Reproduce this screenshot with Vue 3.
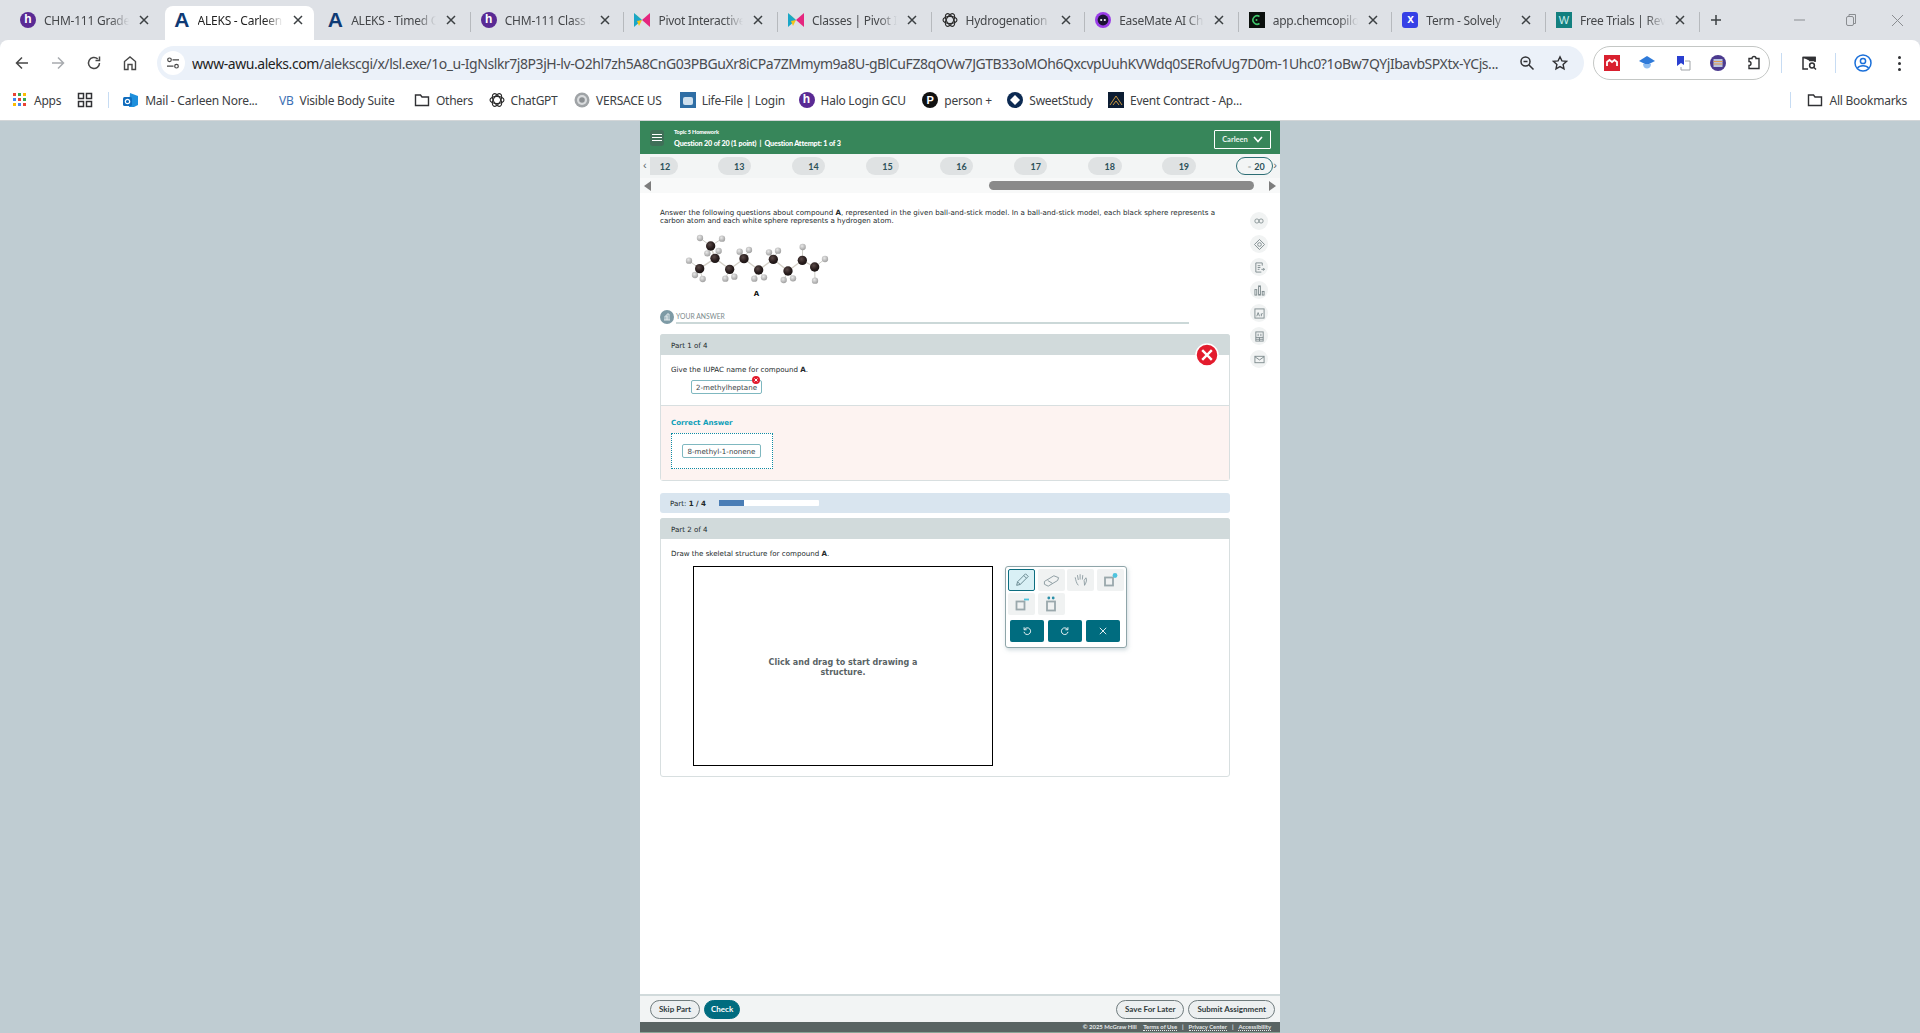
<script setup>
const tabs = [
  { title: 'CHM-111 Gradebook', icon: 'halo' },
  { title: 'ALEKS - Carleen Norell', icon: 'aleks', active: true },
  { title: 'ALEKS - Timed Quiz', icon: 'aleks' },
  { title: 'CHM-111 Class List', icon: 'halo' },
  { title: 'Pivot Interactives', icon: 'pivot' },
  { title: 'Classes | Pivot Interactives', icon: 'pivot' },
  { title: 'Hydrogenation', icon: 'gpt' },
  { title: 'EaseMate AI Chat', icon: 'ease' },
  { title: 'app.chemcopilot', icon: 'chem' },
  { title: 'Term - Solvely', icon: 'solvely' },
  { title: 'Free Trials | Review', icon: 'wv' }
]
const pills = ['13', '14', '15', '16', '17', '18', '19']
const carbons = [[122,63],[135,100],[89,131],[179,133],[222,101],[266,135],[310,103],[354,138],[397,106],[434,126]]
const hydrogens = [
  [90,39,0],[156,41,0],[112,85,0],[146,78,1],[57,107,2],[75,150,2],[98,162,2],[166,161,3],[193,155,3],
  [209,80,4],[237,75,4],[253,161,5],[282,157,5],[297,82,6],[324,77,6],[341,165,7],[369,160,7],
  [398,66,8],[465,102,9],[435,167,9]
]
const chain = [[0,1],[1,2],[1,3],[3,4],[4,5],[5,6],[6,7],[7,8],[8,9]]
const rail = ['inf', 'tag', 'note', 'bars', 'ar', 'calc', 'mail']
</script>

<template>
  <div class="browser">
    <div class="tabstrip">
      <div v-for="(t, i) in tabs" :key="i" class="tab" :class="{ active: t.active, sep: i >= 2 }">
        <span class="favicon">
          <span v-if="t.icon === 'halo'" class="fav-halo">h</span>
          <span v-else-if="t.icon === 'aleks'" class="fav-aleks">A</span>
          <svg v-else-if="t.icon === 'pivot'" viewBox="0 0 16 16" width="16" height="16">
            <polygon points="0,1 8,8 0,15" fill="#1aa6c8" />
            <polygon points="16,1 8,8 16,15" fill="#e5267f" />
            <polygon points="3,9 8,8 5,14" fill="#f5c518" />
            <polygon points="0,1 8,8 4,5" fill="#2fb66d" />
          </svg>
          <svg v-else-if="t.icon === 'gpt'" viewBox="0 0 16 16" width="16" height="16" fill="none" stroke="#2b2b2b" stroke-width="1.1">
            <ellipse cx="8" cy="8" rx="7" ry="3.6" />
            <ellipse cx="8" cy="8" rx="7" ry="3.6" transform="rotate(60 8 8)" />
            <ellipse cx="8" cy="8" rx="7" ry="3.6" transform="rotate(120 8 8)" />
          </svg>
          <svg v-else-if="t.icon === 'ease'" viewBox="0 0 16 16" width="16" height="16">
            <circle cx="8" cy="8" r="8" fill="#9a3de8" />
            <circle cx="8" cy="8" r="5.4" fill="#1b1333" />
            <circle cx="6.2" cy="8" r="1.1" fill="#fff" />
            <circle cx="9.8" cy="8" r="1.1" fill="#fff" />
          </svg>
          <svg v-else-if="t.icon === 'chem'" viewBox="0 0 16 16" width="16" height="16">
            <rect width="16" height="16" fill="#0a0f0c" />
            <path d="M10.5 4.5A4.2 4.2 0 1 0 10.5 11.5" fill="none" stroke="#3fc66b" stroke-width="1.6" />
            <circle cx="7.5" cy="8" r="1" fill="#3fc66b" />
          </svg>
          <span v-else-if="t.icon === 'solvely'" class="fav-solvely">x</span>
          <span v-else-if="t.icon === 'wv'" class="fav-wv">W</span>
        </span>
        <span class="tab-title">{{ t.title }}</span>
        <svg class="tab-close" viewBox="0 0 10 10" width="10" height="10"><path d="M1 1l8 8M9 1l-8 8" stroke="#3c4043" stroke-width="1.5" fill="none" /></svg>
      </div>
      <svg class="newtab" viewBox="0 0 12 12" width="12" height="12"><path d="M6 1v10M1 6h10" stroke="#3c4043" stroke-width="1.5" /></svg>
      <div class="winctl">
        <svg viewBox="0 0 46 20" width="46" height="20"><path d="M12 10h11" stroke="#8a8d91" /></svg>
        <svg viewBox="0 0 46 20" width="46" height="20" fill="none" stroke="#8a8d91"><rect x="18.5" y="6.5" width="7" height="9" rx="1.5" /><path d="M21 6V4.500h6.500v9H26" /></svg>
        <svg viewBox="0 0 46 20" width="46" height="20"><path d="M18 5l11 11M29 5L18 16" stroke="#8a8d91" /></svg>
      </div>
    </div>

    <div class="toolbar">
      <span class="navbtn"><svg viewBox="0 0 16 16" width="16" height="16" fill="none" stroke="#474747" stroke-width="1.5"><path d="M14 8H2.500M8 2.500L2.500 8 8 13.500" /></svg></span>
      <span class="navbtn"><svg viewBox="0 0 16 16" width="16" height="16" fill="none" stroke="#a8abaf" stroke-width="1.5"><path d="M2 8h11.500M8 2.500L13.500 8 8 13.500" /></svg></span>
      <span class="navbtn"><svg viewBox="0 0 16 16" width="16" height="16" fill="none" stroke="#474747" stroke-width="1.500"><path d="M13.500 8A5.500 5.500 0 1 1 11.700 3.900" /><path d="M13.500 1.500v4h-4" /></svg></span>
      <span class="navbtn"><svg viewBox="0 0 16 16" width="16" height="16" fill="none" stroke="#474747" stroke-width="1.400"><path d="M2.500 14.500V6.500L8 2l5.500 4.500v8h-3.500v-5H6v5z" /></svg></span>
      <div class="omnibox">
        <span class="tune"><svg viewBox="0 0 14 14" width="14" height="14" fill="none" stroke="#474747" stroke-width="1.200"><circle cx="3.500" cy="3.800" r="1.800" /><path d="M6.500 3.800H13M1 10.200h6.500" /><circle cx="10.500" cy="10.200" r="1.800" /></svg></span>
        <span class="url"><b>www-awu.aleks.com</b>/alekscgi/x/lsl.exe/1o_u-IgNslkr7j8P3jH-lv-O2hl7zh5A8CnG03PBGuXr8iCPa7ZMmym9a8U-gBlCuFZ8qOVw7JGTB33oMOh6QxcvpUuhKVWdq0SERofvUg7D0m-1Uhc0?1oBw7QYjIbavbSPXtx-YCjs...</span>
        <svg class="omni-i" viewBox="0 0 16 16" width="16" height="16" fill="none" stroke="#303134" stroke-width="1.500"><circle cx="6.500" cy="6.500" r="4.500" /><path d="M10 10l4.500 4.500M4.500 6.500h4" /></svg>
        <svg class="omni-i star" viewBox="0 0 16 16" width="16" height="16" fill="none" stroke="#303134" stroke-width="1.400"><path d="M8 1.800l1.900 4.100 4.500.5-3.300 3 .9 4.400L8 11.600l-4 2.200.9-4.400-3.300-3 4.500-.5z" /></svg>
      </div>
      <div class="extpill">
        <span class="ext"><svg viewBox="0 0 16 16" width="16" height="16"><rect width="16" height="16" fill="#d9202f" /><path d="M3 11V7l2.500-2L8 7l2.500-2L13 7v4" fill="none" stroke="#fff" stroke-width="1.800" /></svg></span>
        <span class="ext"><svg viewBox="0 0 16 16" width="16" height="16"><polygon points="8,1 16,6 8,10 0,6" fill="#2f7ad9" /><path d="M4 9c0 6 8 6 8 0z" fill="#8fbdf0" /></svg></span>
        <span class="ext"><svg viewBox="0 0 16 16" width="16" height="16"><path d="M2 1h7v9L6 8l-4 3z" fill="#2a3fd0" /><path d="M10 6h5v9H6v-3" fill="none" stroke="#a0a3a8" /></svg></span>
        <span class="ext"><svg viewBox="0 0 16 16" width="16" height="16"><circle cx="8" cy="8" r="8" fill="#4b3a8f" /><rect x="3.500" y="4" width="9" height="8" fill="#b9c3de" /><path d="M3.500 6.500h9M3.500 9h9" stroke="#e09a4a" /></svg></span>
        <span class="ext"><svg viewBox="0 0 16 16" width="16" height="16" fill="none" stroke="#303134" stroke-width="1.400"><path d="M3 3.500h3a2 2 0 0 1 4 0h3v10H3v-3a2 2 0 0 0 0-4z" /></svg></span>
      </div>
      <span class="tdiv first"></span>
      <span class="tbtn"><svg viewBox="0 0 16 16" width="16" height="16" fill="none" stroke="#303134" stroke-width="1.500"><path d="M7 14H2V2.500h12V7" /><path d="M2 2.500h12v3H8" fill="#303134" /><circle cx="11" cy="10.500" r="2.400" /><path d="M13 12.500l2 2" /></svg></span>
      <span class="tdiv"></span>
      <span class="tbtn"><svg viewBox="0 0 18 18" width="18" height="18" fill="none" stroke="#1a6fd9" stroke-width="1.500"><circle cx="9" cy="9" r="8" /><circle cx="9" cy="7" r="2.600" /><path d="M3.500 14c2-3 9-3 11 0" /></svg></span>
      <span class="tbtn dots"><i></i><i></i><i></i></span>
    </div>

    <div class="bookmarks">
      <span class="bm apps">
        <svg viewBox="0 0 14 14" width="14" height="14">
          <rect x="0" y="0" width="3" height="3" fill="#ea4335" /><rect x="5" y="0" width="3" height="3" fill="#34a853" /><rect x="10" y="0" width="3" height="3" fill="#fbbc04" />
          <rect x="0" y="5" width="3" height="3" fill="#4285f4" /><rect x="5" y="5" width="3" height="3" fill="#ea4335" /><rect x="10" y="5" width="3" height="3" fill="#34a853" />
          <rect x="0" y="10" width="3" height="3" fill="#fbbc04" /><rect x="5" y="10" width="3" height="3" fill="#4285f4" /><rect x="10" y="10" width="3" height="3" fill="#ea4335" />
        </svg>
        Apps
      </span>
      <svg class="gridicon" viewBox="0 0 16 16" width="16" height="16" fill="none" stroke="#303134" stroke-width="1.500"><rect x="1.500" y="1.500" width="5" height="5" /><rect x="9.500" y="1.500" width="5" height="5" /><rect x="1.500" y="9.500" width="5" height="5" /><rect x="9.500" y="9.500" width="5" height="5" /></svg>
      <span class="bdiv"></span>
      <span class="bm"><svg viewBox="0 0 16 16" width="16" height="16"><path d="M7 1l8 3v9l-4 2H6z" fill="#1e8fdc" /><rect x="0" y="5" width="9" height="9" rx="1.500" fill="#0f6cbd" /><circle cx="4.500" cy="9.500" r="2.200" fill="none" stroke="#fff" stroke-width="1.200" /></svg>Mail - Carleen Nore...</span>
      <span class="bm"><span class="vb">VB</span>Visible Body Suite</span>
      <span class="bm"><svg viewBox="0 0 16 16" width="16" height="16" fill="none" stroke="#303134" stroke-width="1.400"><path d="M1.500 3h5l1.500 2h6.500v8.500h-13z" /></svg>Others</span>
      <span class="bm"><svg viewBox="0 0 16 16" width="16" height="16" fill="none" stroke="#2b2b2b" stroke-width="1.100"><ellipse cx="8" cy="8" rx="7" ry="3.600" /><ellipse cx="8" cy="8" rx="7" ry="3.600" transform="rotate(60 8 8)" /><ellipse cx="8" cy="8" rx="7" ry="3.600" transform="rotate(120 8 8)" /></svg>ChatGPT</span>
      <span class="bm"><svg viewBox="0 0 16 16" width="16" height="16"><circle cx="8" cy="8" r="7.500" fill="#9fa3a6" /><circle cx="8" cy="8" r="5" fill="#d9dbdd" /><circle cx="8" cy="8" r="2.800" fill="#8b8f92" /></svg>VERSACE US</span>
      <span class="bm"><svg viewBox="0 0 16 16" width="16" height="16"><rect width="16" height="16" fill="#2f6ea5" /><rect x="3" y="5" width="10" height="8" rx="2" fill="#cfe0ee" /></svg>Life-File | Login</span>
      <span class="bm"><span class="fav-halo">h</span>Halo Login GCU</span>
      <span class="bm"><span class="fav-p">P</span>person +</span>
      <span class="bm"><svg viewBox="0 0 16 16" width="16" height="16"><circle cx="8" cy="8" r="8" fill="#0c2a52" /><polygon points="8,3 13,8 8,13 3,8" fill="#fff" /></svg>SweetStudy</span>
      <span class="bm"><svg viewBox="0 0 16 16" width="16" height="16"><rect width="16" height="16" fill="#0d1d33" /><path d="M2 13L8 4l6 9M5 13l3-4 3 4" fill="none" stroke="#c9973f" /></svg>Event Contract - Ap...</span>
      <span class="bdiv right"></span>
      <span class="bm"><svg viewBox="0 0 16 16" width="16" height="16" fill="none" stroke="#303134" stroke-width="1.400"><path d="M1.500 3h5l1.500 2h6.500v8.500h-13z" /></svg>All Bookmarks</span>
    </div>

    <div class="page">
      <div class="panel">
        <header class="head">
          <span class="burger"><i></i><i></i><i></i></span>
          <div class="head-txt">
            <div class="topic">Topic 5 Homework</div>
            <div class="qline">Question 20 of 20 (1 point) &nbsp;|&nbsp; Question Attempt: 1 of 3</div>
          </div>
          <button class="user">Carleen <svg viewBox="0 0 10 7" width="10" height="7"><path d="M1 1l4 4.500L9 1" fill="none" stroke="#fff" stroke-width="1.600" /></svg></button>
        </header>

        <nav class="qnav">
          <span class="chev left">‹</span>
          <span class="pill first">12</span>
          <span v-for="p in pills" :key="p" class="pill">{{ p }}</span>
          <span class="pill current"><em>=</em> 20</span>
          <span class="chev right">›</span>
        </nav>
        <div class="hscroll">
          <span class="tri l"></span>
          <span class="thumb"></span>
          <span class="tri r"></span>
        </div>

        <main class="main">
          <div class="col">
            <p class="q">Answer the following questions about compound <b>A</b>, represented in the given ball-and-stick model. In a ball-and-stick model, each black sphere represents a carbon atom and each white sphere represents a hydrogen atom.</p>
            <div class="figure">
              <svg viewBox="0 0 510 189" width="170" height="63">
                <defs>
                  <radialGradient id="cg" cx="0.4" cy="0.35" r="0.7"><stop offset="0" stop-color="#5a4a48" /><stop offset="0.6" stop-color="#2a1e1e" /><stop offset="1" stop-color="#171212" /></radialGradient>
                  <radialGradient id="hg" cx="0.4" cy="0.35" r="0.7"><stop offset="0" stop-color="#e8e8e8" /><stop offset="1" stop-color="#9c9c9c" /></radialGradient>
                </defs>
                <line v-for="(h, i) in hydrogens" :key="'hb' + i" :x1="h[0]" :y1="h[1]" :x2="carbons[h[2]][0]" :y2="carbons[h[2]][1]" stroke="#cfcfc8" stroke-width="3" />
                <line v-for="(b, i) in chain" :key="'cb' + i" :x1="carbons[b[0]][0]" :y1="carbons[b[0]][1]" :x2="carbons[b[1]][0]" :y2="carbons[b[1]][1]" stroke="#d3cfc6" stroke-width="4" />
                <circle v-for="(h, i) in hydrogens" :key="'h' + i" :cx="h[0]" :cy="h[1]" r="9.500" fill="url(#hg)" />
                <circle v-for="(c, i) in carbons" :key="'c' + i" :cx="c[0]" :cy="c[1]" r="14" fill="url(#cg)" />
              </svg>
              <div class="fig-label">A</div>
            </div>

            <div class="ya">
              <span class="ya-dot"><svg viewBox="0 0 8 8" width="8" height="8"><path d="M1 7h6M2 7V3h2v4M4 7V1h2v6" fill="none" stroke="#dfe7ea" /></svg></span>
              <span class="ya-label">YOUR ANSWER</span>
            </div>

            <section class="card one">
              <div class="card-head">Part 1 of 4</div>
              <div class="wrong"><svg viewBox="0 0 24 24" width="24" height="24"><circle cx="12" cy="12" r="11" fill="#e31b2d" stroke="#fff" stroke-width="1.500" /><path d="M7.200 7.200l9.600 9.600M16.800 7.200l-9.600 9.600" stroke="#fff" stroke-width="2.400" /></svg></div>
              <div class="card-body answer">
                <div class="prompt">Give the IUPAC name for compound <b>A</b>.</div>
                <div class="ansbox mine">2-methylheptane
                  <svg class="badx" viewBox="0 0 8 8" width="8" height="8"><circle cx="4" cy="4" r="4" fill="#e31b2d" /><path d="M2.500 2.500l3 3M5.500 2.500l-3 3" stroke="#fff" /></svg>
                </div>
              </div>
              <div class="correct">
                <div class="ctitle">Correct Answer</div>
                <div class="dotted"><div class="ansbox">8-methyl-1-nonene</div></div>
              </div>
            </section>

            <div class="progress">
              <span>Part: <b>1 / 4</b></span>
              <span class="track"><span class="fill"></span></span>
            </div>

            <section class="card two">
              <div class="card-head">Part 2 of 4</div>
              <div class="card-body draw">
                <div class="prompt">Draw the skeletal structure for compound <b>A</b>.</div>
                <div class="workspace">
                  <div class="canvas"><span>Click and drag to start drawing a structure.</span></div>
                  <div class="palette">
                    <div class="tools">
                      <span class="tool on"><svg viewBox="0 0 18 18" width="16" height="16" fill="none" stroke="#5f7f87"><path d="M3 15l1-4L13 2l3 3-9 9zM4 11l3 3M11 4l3 3" /></svg></span>
                      <span class="tool"><svg viewBox="0 0 18 18" width="17" height="17" fill="none" stroke="#8a9a9f"><path d="M1.500 10l10-6 5 2-1 3-10 6-4-2zM5 9l5 3" /></svg></span>
                      <span class="tool"><svg viewBox="0 0 18 18" width="16" height="16" fill="none" stroke="#8a9a9f"><path d="M6 15C4 13 3 9 2.500 6M6 9L5 3.500M8 8.500V2.500M10.500 8.500l.5-5M12.500 9.500l2-3C16 8 15 12 13 15z" /></svg></span>
                      <span class="tool"><svg viewBox="0 0 18 18" width="18" height="18"><rect x="4" y="6.500" width="8" height="8" fill="none" stroke="#9aa8ac" stroke-width="1.800" /><circle cx="14" cy="4.500" r="2.400" fill="#4fc3dd" /></svg></span>
                      <span class="tool"><svg viewBox="0 0 18 18" width="18" height="18"><rect x="3.500" y="6.500" width="8" height="8" fill="none" stroke="#9aa8ac" stroke-width="1.800" /><path d="M11 4.500h5" stroke="#4fc3dd" stroke-width="1.800" /></svg></span>
                      <span class="tool"><svg viewBox="0 0 18 18" width="18" height="18"><rect x="5" y="6.500" width="8" height="9" fill="none" stroke="#9aa8ac" stroke-width="1.800" /><circle cx="6.800" cy="3" r="1.400" fill="#2c8fa8" /><circle cx="11.200" cy="3" r="1.400" fill="#2c8fa8" /></svg></span>
                    </div>
                    <div class="actions">
                      <button class="act"><svg viewBox="0 0 12 12" width="10" height="10" fill="none" stroke="#fff" stroke-width="1.100"><path d="M3 4a4 4 0 1 1-.6 3M2.500 1.500V4.500h3" /></svg></button>
                      <button class="act"><svg viewBox="0 0 12 12" width="10" height="10" fill="none" stroke="#fff" stroke-width="1.100"><path d="M9 4a4 4 0 1 0 .6 3M9.500 1.500V4.500h-3" /></svg></button>
                      <button class="act"><svg viewBox="0 0 10 10" width="8" height="8" fill="none" stroke="#fff" stroke-width="1.100"><path d="M1 1l8 8M9 1l-8 8" /></svg></button>
                    </div>
                  </div>
                </div>
              </div>
            </section>
          </div>

          <aside class="rail">
            <span v-for="r in rail" :key="r" class="rail-btn">
              <svg v-if="r === 'inf'" viewBox="0 0 12 12" width="10" height="10" fill="none" stroke="#7d8a8d"><circle cx="3.500" cy="6" r="2.500" /><circle cx="8.500" cy="6" r="2.500" /></svg>
              <svg v-else-if="r === 'tag'" viewBox="0 0 12 12" width="11" height="11" fill="none" stroke="#7d8a8d"><polygon points="6,.5 11.500,6 6,11.500 .5,6" /><circle cx="6" cy="6" r="2" /></svg>
              <svg v-else-if="r === 'note'" viewBox="0 0 12 12" width="11" height="11" fill="none" stroke="#7d8a8d"><path d="M9 4V1H2v10h6M4 4h3M4 6h3M4 8h2M8 8h3.500M10 6.500l1.500 1.500L10 9.500" /></svg>
              <svg v-else-if="r === 'bars'" viewBox="0 0 12 12" width="11" height="11" fill="none" stroke="#7d8a8d"><rect x="1" y="5" width="2" height="6" /><rect x="5" y="1" width="2" height="10" /><rect x="9" y="7" width="2" height="4" /></svg>
              <svg v-else-if="r === 'ar'" viewBox="0 0 12 12" width="11" height="11" fill="none" stroke="#7d8a8d"><rect x="1" y="1" width="10" height="10" /><path d="M3 9l1.500-4L6 9M8 6v3M8 7l1.500-1" /></svg>
              <svg v-else-if="r === 'calc'" viewBox="0 0 12 12" width="11" height="11" fill="none" stroke="#7d8a8d"><rect x="2" y="1" width="8" height="10" /><path d="M2 7h8M2 9h8M6 7v4M4.500 3v2.500M7.500 3v2.500" /></svg>
              <svg v-else viewBox="0 0 12 12" width="11" height="11" fill="none" stroke="#7d8a8d"><rect x="1" y="2.500" width="10" height="7" /><path d="M1 3l5 3.500L11 3" /></svg>
            </span>
          </aside>
        </main>

        <footer class="foot">
          <button class="fbtn">Skip Part</button>
          <button class="fbtn check">Check</button>
          <span class="spacer"></span>
          <button class="fbtn">Save For Later</button>
          <button class="fbtn">Submit Assignment</button>
        </footer>
        <div class="legal">© 2025 McGraw Hill <a>Terms of Use</a><i>|</i><a>Privacy Center</a><i>|</i><a>Accessibility</a></div>
      </div>
    </div>
  </div>
</template>

<style>
html, body { margin: 0; overflow: hidden; }
</style>

<style scoped>
.browser { width: 1920px; height: 1033px; display: flex; flex-direction: column; background: #dee1e6; font-family: "Noto Sans", "Liberation Sans", sans-serif; overflow: hidden; }

.tabstrip { height: 40px; padding: 6px 0 0 11px; box-sizing: border-box; display: flex; flex: none; position: relative; }
.tab { width: 153.6px; flex: none; height: 34px; box-sizing: border-box; display: flex; align-items: center; padding: 0 0 6px 9px; position: relative; color: #45474a; font-size: 12px; letter-spacing: -.25px; }
.tab.active { background: #fff; border-radius: 8px 8px 0 0; color: #1f1f1f; width: 149.600px; margin-right: 4px; padding-bottom: 6px; }
.tab.sep::after { content: ""; position: absolute; right: 1px; top: 6px; height: 20px; width: 1px; background: #b6b9bd; }
.favicon { width: 16px; height: 16px; flex: none; display: flex; align-items: center; justify-content: center; margin-right: 8px; }
.fav-halo { width: 16px; height: 16px; flex: none; border-radius: 50%; background: #5a2a94; color: #fff; font: bold 12px/15px "Liberation Sans", sans-serif; text-align: center; letter-spacing: 0; }
.fav-aleks { color: #0e3a75; font: bold 21px/16px "Liberation Sans", sans-serif; }
.fav-solvely { width: 16px; height: 16px; border-radius: 3px; background: #3640e6; color: #fff; font: bold 12px/14px "Liberation Sans", sans-serif; text-align: center; }
.fav-wv { width: 16px; height: 16px; background: #13807f; color: #cfeeee; font: 11px/16px "Liberation Sans", sans-serif; text-align: center; }
.fav-p { width: 16px; height: 16px; flex: none; border-radius: 50%; background: #111; color: #fff; font: bold 11px/16px "Liberation Sans", sans-serif; text-align: center; letter-spacing: 0; }
.tab-title { width: 85px; overflow: hidden; white-space: nowrap; flex: none; -webkit-mask-image: linear-gradient(90deg, #000 78%, transparent 100%); mask-image: linear-gradient(90deg, #000 78%, transparent 100%); }
.tab-close { margin-left: 10px; flex: none; }
.newtab { margin: 8px 0 0 9px; flex: none; }
.winctl { position: absolute; right: 0; top: 10px; display: flex; }
.winctl svg { display: block; }

.toolbar { height: 40px; background: #fff; border-radius: 8px 8px 0 0; display: flex; align-items: flex-start; padding: 6px 0 0 4px; box-sizing: border-box; flex: none; }
.navbtn { width: 36px; height: 34px; flex: none; display: flex; align-items: center; justify-content: center; }
.omnibox { width: 1427px; height: 34px; margin-left: 9px; border-radius: 17px; background: #ebf1f9; display: flex; align-items: center; box-sizing: border-box; flex: none; }
.tune { width: 24px; height: 24px; margin-left: 4px; border-radius: 50%; background: #fff; display: flex; align-items: center; justify-content: center; flex: none; }
.url { margin-left: 7px; width: 1315px; flex: none; white-space: nowrap; overflow: hidden; font-size: 14px; letter-spacing: -.44px; color: #4a4c50; }
.url b { font-weight: 400; color: #1f1f1f; }
.omni-i { flex: none; margin-left: 12px; }
.omni-i.star { margin-left: 17px; }
.extpill { width: 177px; height: 34px; margin-left: 9px; border: 1px solid #c4c7c5; border-radius: 17px; box-sizing: border-box; display: flex; align-items: center; flex: none; }
.ext { width: 35.500px; flex: none; display: flex; justify-content: center; }
.tdiv { width: 1px; height: 20px; background: #c7dcf3; margin: 7px 0 0 0; flex: none; }
.tdiv.first { margin-left: 11px; }
.tbtn { width: 53px; height: 34px; flex: none; display: flex; align-items: center; justify-content: center; }
.dots { width: 20px; flex-direction: column; gap: 3px; }
.dots i { width: 3px; height: 3px; border-radius: 50%; background: #303134; display: block; }

.bookmarks { height: 40px; background: #fff; display: flex; align-items: center; padding-left: 13px; box-sizing: border-box; flex: none; font-size: 12px; letter-spacing: -.25px; color: #3c4043; white-space: nowrap; }
.bm { display: flex; align-items: center; gap: 6px; margin-right: 18px; flex: none; }
.bm.apps { margin-right: 16px; gap: 7px; }
.bm:nth-child(4) { margin-right: 21.500px; }
.bm:nth-child(5) { margin-right: 19.500px; }
.bm:nth-child(6) { margin-right: 15.500px; }
.bm:nth-child(7) { margin-right: 16.500px; }
.bm:nth-child(9) { margin-right: 13.500px; }
.bm:nth-child(10) { margin-right: 16.500px; }
.bm:nth-child(11) { margin-right: 15.500px; }
.bm:nth-child(12) { margin-right: 15.500px; }
.gridicon { flex: none; margin-right: 15px; }
.bdiv { width: 1px; height: 16px; background: #c7dcf3; margin-right: 14px; flex: none; }
.bdiv.right { margin-left: auto; margin-right: 16px; }
.bookmarks .bm:last-child { margin-right: 13px; }
.vb { color: #3d6fb4; font-size: 12px; }

.page { flex: 1; min-height: 0; background: #bfccd2; border-top: 1px solid #d3d6d8; display: flex; justify-content: center; }
.panel { width: 640px; background: #fff; display: flex; flex-direction: column; font-family: "DejaVu Sans", sans-serif; }

.head { height: 33px; background: #37865a; display: flex; align-items: center; flex: none; color: #fff; font-family: Lato, sans-serif; position: relative; }
.burger { width: 14px; height: 16px; margin-left: 10px; display: flex; flex-direction: column; justify-content: center; gap: 2px; background: #3f7058; border-radius: 3px; padding: 0 2px; box-sizing: border-box; }
.burger i { height: 1px; background: #fff; display: block; }
.head-txt { margin-left: 10px; padding-top: 2px; }
.topic { font-size: 5.500px; font-weight: 900; line-height: 9px; letter-spacing: -.1px; }
.qline { font-size: 7.200px; font-weight: 900; line-height: 11px; margin-top: 1px; letter-spacing: -.15px; white-space: nowrap; }
.user { position: absolute; right: 9px; top: 9px; width: 57px; height: 19px; background: transparent; border: 1px solid #fff; border-radius: 1px; color: #e9f3ee; font: 700 7.500px Lato, sans-serif; padding: 0; display: flex; align-items: center; justify-content: center; gap: 5px; }

.qnav { height: 24px; background: #f3f5f5; display: flex; align-items: center; padding-left: 10px; flex: none; position: relative; font-family: Lato, sans-serif; overflow: hidden; }
.pill { width: 33.600px; height: 18px; margin-right: 40.500px; flex: none; background: #dfe2e3; border-radius: 9px; color: #2d5159; font-size: 9px; font-weight: 700; display: flex; align-items: center; justify-content: center; padding-left: 10px; box-sizing: border-box; }
.pill.first { width: 28px; margin-right: 39.500px; border-radius: 0 9px 9px 0; padding-left: 2px; }
.pill.current { width: 37px; margin-right: 0; background: #f3f5f5; border: 1px solid #2d6e75; padding-left: 3px; gap: 3px; }
.pill.current em { font-style: normal; color: #9aa6a8; font-size: 6px; }
.chev { position: absolute; top: 5px; font: 11px/12px "Liberation Sans", sans-serif; color: #59656a; }
.chev.left { left: 3px; }
.chev.right { right: 3px; }

.hscroll { height: 15px; background: #f8f9f9; flex: none; display: flex; align-items: center; position: relative; }
.tri { width: 0; height: 0; border-top: 5px solid transparent; border-bottom: 5px solid transparent; flex: none; }
.tri.l { margin-left: 4px; border-right: 7px solid #7d7d7d; }
.tri.r { margin-left: 15px; border-left: 7px solid #7d7d7d; }
.thumb { margin-left: 338px; width: 265px; height: 9px; border-radius: 5px; background: #8a8a8a; flex: none; }

.main { flex: 1; min-height: 0; display: flex; align-items: flex-start; overflow: hidden; }
.col { width: 570px; margin-left: 20px; padding-top: 16px; flex: none; color: #22292b; font-size: 7.100px; }
.q { margin: 0; line-height: 8px; }
.figure { margin-left: 10px; width: 170px; }
.figure svg { display: block; }
.fig-label { text-align: center; font-weight: 700; font-size: 7px; line-height: 8px; margin-top: 2px; color: #111; width: 173px; }
.ya { display: flex; align-items: flex-start; height: 14px; margin-top: 12px; width: 529px; }
.ya-dot { width: 14px; height: 14px; border-radius: 50%; background: #7d9aa5; display: flex; align-items: center; justify-content: center; flex: none; margin-right: 2px; }
.ya-label { flex: 1; height: 12px; border-bottom: 2px solid #cbd8d8; color: #7a8a8c; font: 6.800px/12px "Lato", sans-serif; }

.card { border: 1px solid #d8dfe0; border-radius: 3px; position: relative; box-sizing: border-box; width: 570px; }
.card.one { margin-top: 10px; }
.card.two { margin-top: 5px; }
.card-head { margin: -1px -1px 0; background: #d1dadb; border-radius: 3px 3px 0 0; padding: 7px 0 0 11px; box-sizing: border-box; height: 21px; line-height: 10px; }
.wrong { position: absolute; right: 10px; top: 8px; width: 24px; height: 24px; }
.wrong svg { display: block; }
.card-body { padding: 10px 10px 0; }
.answer { height: 51px; box-sizing: border-box; border-bottom: 1px solid #d8dfe0; }
.prompt { line-height: 10px; }
.ansbox { display: inline-flex; align-items: center; justify-content: center; height: 14px; box-sizing: border-box; border: 1px solid #7fb8c0; border-radius: 2px; background: #fff; font-size: 7.100px; color: #3a4345; white-space: nowrap; position: relative; padding: 0 2px; }
.ansbox.mine { margin: 5px 0 0 20px; width: 71px; display: flex; }
.badx { position: absolute; right: 1px; top: -5px; }
.correct { background: #fdf3f1; padding: 12px 10px 0; height: 74px; box-sizing: border-box; }
.ctitle { font-weight: 700; color: #0f9fb8; line-height: 10px; }
.dotted { margin-top: 5px; width: 102px; height: 36px; border: 1px dotted #108ba3; background: #fff; box-sizing: border-box; padding: 10px 0 0 10px; }
.dotted .ansbox { width: 79px; display: flex; }
.progress { margin-top: 12px; height: 20px; background: #d9e5ef; border-radius: 3px; display: flex; align-items: center; padding-left: 10px; box-sizing: border-box; }
.progress > span:first-child { width: 49px; flex: none; white-space: nowrap; }
.track { width: 100px; height: 6px; background: #fff; border-radius: 1px; display: block; flex: none; }
.fill { width: 25px; height: 6px; background: #4a7db5; display: block; }
.draw { padding-bottom: 10px; }
.workspace { display: flex; align-items: flex-start; margin-top: 7px; margin-left: 22px; }
.canvas { width: 300px; height: 200px; border: 1px solid #000; box-sizing: border-box; display: flex; align-items: center; justify-content: center; text-align: center; flex: none; }
.canvas span { width: 150px; font: 700 8px/10px "DejaVu Sans", sans-serif; color: #596365; margin-top: 3px; }
.palette { width: 122px; height: 82px; margin-left: 12px; border: 1px solid #8fa5a9; border-radius: 3px; box-sizing: border-box; box-shadow: 1px 2px 4px rgba(120,150,160,.35); padding: 2px; background: #fff; flex: none; }
.tools { display: grid; grid-template-columns: repeat(4, 27px); grid-auto-rows: 22px; column-gap: 2.600px; row-gap: 2px; }
.tool { background: #f0f2f2; border-radius: 2px; display: flex; align-items: center; justify-content: center; box-sizing: border-box; }
.tool.on { background: #d9f0f5; border: 1px solid #0c6e80; }
.actions { display: flex; gap: 4px; margin: 5px 0 0 2px; }
.act { width: 34px; height: 22px; border: 0; border-radius: 2px; background: #006c7f; padding: 0; display: flex; align-items: center; justify-content: center; }

.rail { margin-left: 20px; padding-top: 19px; display: flex; flex-direction: column; gap: 5px; flex: none; }
.rail-btn { width: 18px; height: 18px; border-radius: 50%; background: #f1f3f3; display: flex; align-items: center; justify-content: center; }

.foot { height: 28px; flex: none; box-sizing: border-box; border-top: 2px solid #d1dadb; background: #f2f4f4; display: flex; align-items: center; padding: 0 5px 0 10px; gap: 4px; font-family: Lato, sans-serif; }
.spacer { flex: 1; }
.fbtn { height: 19px; border: 1px solid #6f7b7d; border-radius: 10px; background: #eceff0; font: 700 8px Lato, sans-serif; color: #2f3a3c; padding: 0 8px; white-space: nowrap; }
.fbtn.check { background: #006c7f; border-color: #006c7f; color: #fff; padding: 0 6px; }
.legal { height: 11px; background: #5a6463; flex: none; color: #e6eaea; font: 700 5.900px/10px Lato, sans-serif; text-align: right; padding-right: 9px; white-space: nowrap; border-bottom: 1px solid #8aa597; box-sizing: border-box; }
.legal a { border-bottom: 1px dotted #e6eaea; margin-left: 5px; }
.legal i { font-style: normal; margin-left: 5px; }
</style>
